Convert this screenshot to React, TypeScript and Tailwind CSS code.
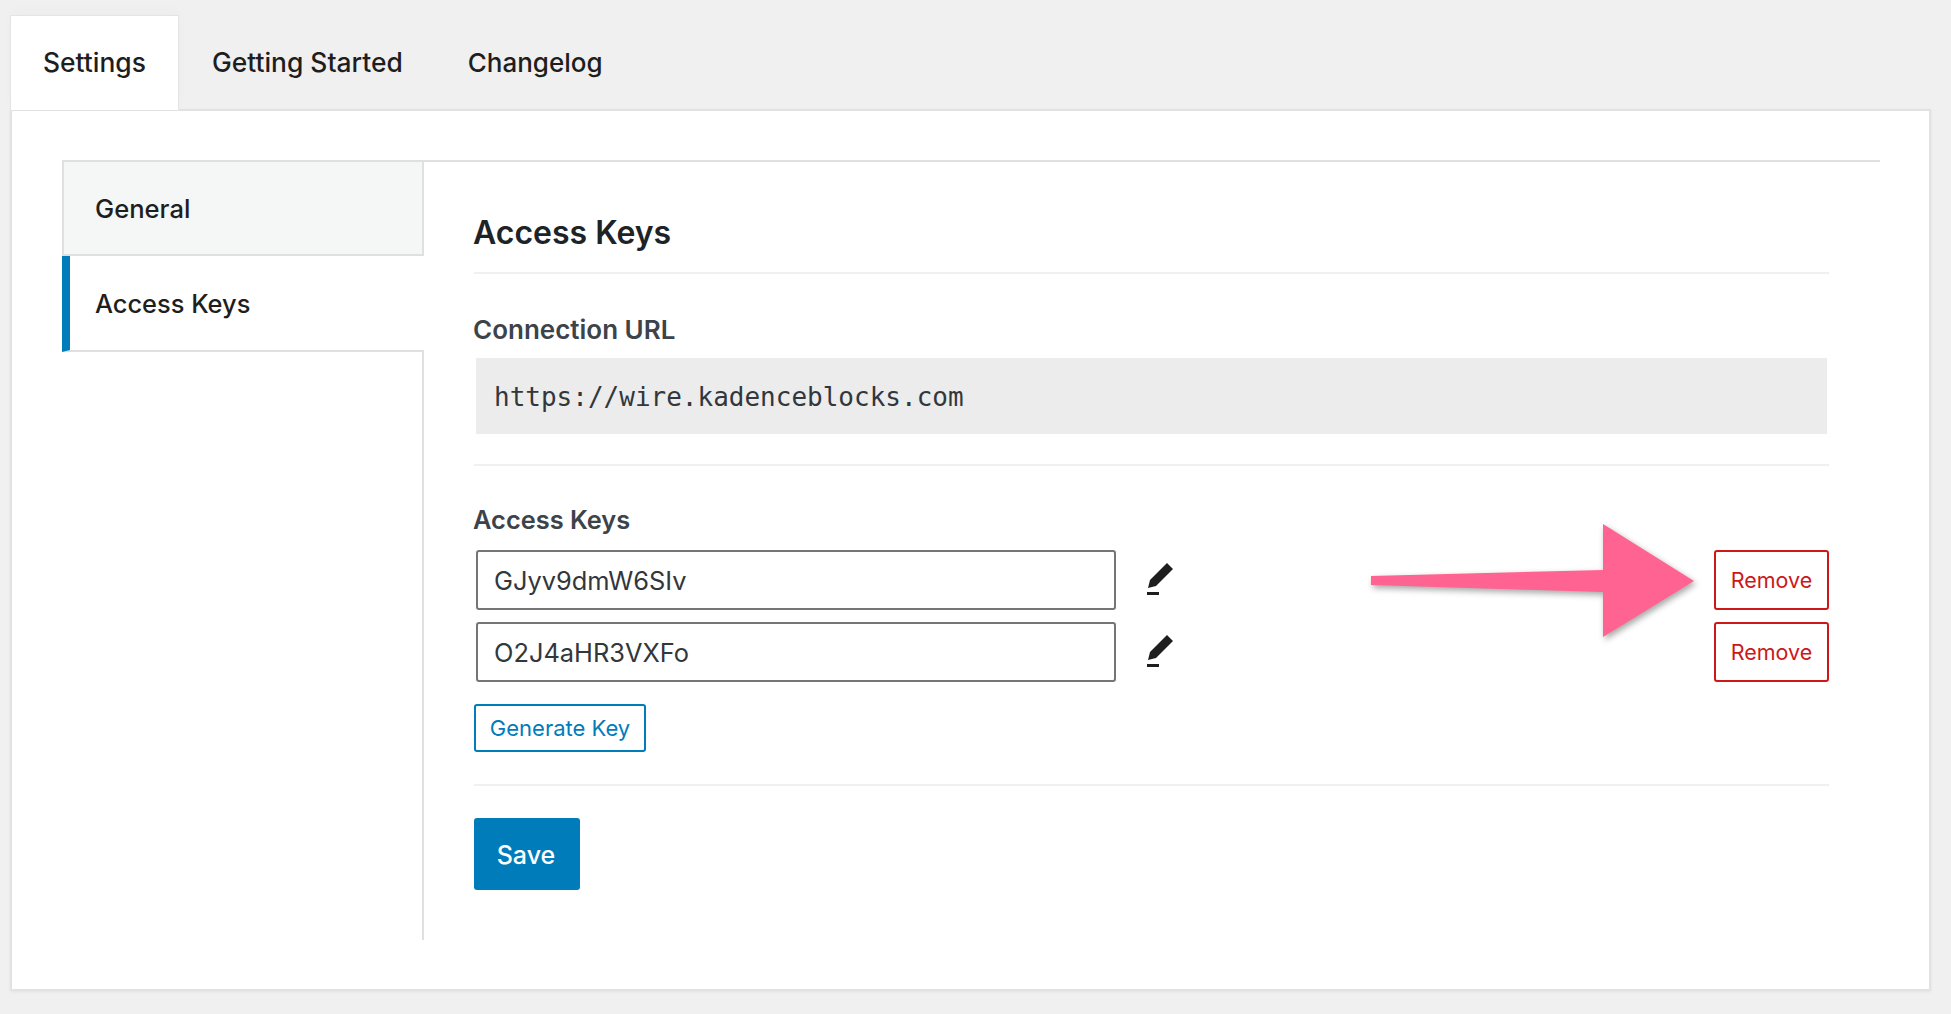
const keys = ["GJyv9dmW6SIv", "O2J4aHR3VXFo"];

function PencilIcon() {
  return (
    <svg viewBox="0 0 24 24" className="-mt-[2px] -ml-px size-[48px] fill-[#1e1e1e]">
      <path d="m19 7-3-3-8.5 8.5-1 4 4-1L19 7Zm-7 11.5H6V20h6v-1.5Z" />
    </svg>
  );
}

function KeyRow({ value, arrow }: { value: string; arrow?: boolean }) {
  return (
    <div className="relative flex h-[60px] items-center">
      <input
        readOnly
        value={value}
        className="ml-[2px] h-[60px] w-[640px] rounded-[3px] border-2 border-[#757575] bg-white px-[16px] pt-px text-[25.4px] text-[#32373c] outline-none"
      />
      <div className="ml-[20px]">
        <PencilIcon />
      </div>
      <button
        type="button"
        className="ml-auto h-[60px] w-[115px] rounded-[3px] border-2 border-[#cc1818] text-[21.5px] text-[#cc1818]"
      >
        Remove
      </button>
      {arrow && (
        <svg
          viewBox="0 0 340 125"
          className="absolute left-[891px] top-[-30px] h-[125px] w-[340px] fill-[#ff6391] drop-shadow-[2px_3px_3px_rgba(0,0,0,0.35)]"
        >
          <polygon points="6,56 238,50 238,4 329,61 238,117 238,72 6,65" />
        </svg>
      )}
    </div>
  );
}

export default function App() {
  return (
    <div className="h-[1014px] overflow-hidden bg-[#f0f0f1] pl-[10px] pr-[20px] pt-[15px] font-['Inter',sans-serif]">
      <div className="relative z-10 -mb-px flex h-[95px] items-center text-[26.4px] font-medium text-[#1e1e1e]">
        <div className="flex h-full w-[169px] items-center border-x border-t border-[#e4e4e4] bg-white pl-[32px] shadow-[0_-4px_12px_rgba(0,0,0,0.02)]">
          Settings
        </div>
        <div className="pl-[33px]">Getting Started</div>
        <div className="pl-[65px] text-[26px]">Changelog</div>
      </div>
      <div className="h-[882px] border-2 border-[#e2e2e2] bg-white pl-[50px] pr-[49px] pt-[49px] shadow-[0_1px_3px_rgba(0,0,0,0.06)]">
        <div className="flex h-[780px]">
          <div className="flex w-[362px] shrink-0 flex-col">
            <div className="flex h-[96px] items-center border-2 border-[#e0e0e0] bg-[#f5f6f6] pl-[31px] pt-[2px] text-[25.6px] font-medium text-[#1e1e1e]">
              General
            </div>
            <div className="flex h-[96px] items-center border-b-2 border-l-8 border-b-[#e0e0e0] border-l-[#007cba] pl-[25px] pt-[3px] text-[25.4px] font-medium text-[#1e1e1e]">
              Access Keys
            </div>
            <div className="flex-1 border-r-2 border-[#e0e0e0]" />
          </div>
          <div className="flex-1 border-t-2 border-[#e0e0e0] pl-[50px] pr-[51px]">
            <h1 className="flex h-[112px] items-end border-b-2 border-[#f0f0f1] pb-[16px] text-[32px] font-semibold leading-[46px] text-[#1d2327]">
              <span className="-ml-px">Access Keys</span>
            </h1>
            <div className="-ml-px mt-[38px] h-[36px] text-[26px] font-semibold leading-[36px] text-[#3c434a]">
              Connection URL
            </div>
            <div className="mx-[2px] mt-[10px] flex h-[76px] items-center bg-[#ececec] pl-[18px] pt-[2px] font-['DejaVu_Sans_Mono',monospace] text-[26px] text-[#32373c]">
              https://wire.kadenceblocks.com
            </div>
            <div className="mt-[30px] h-[2px] bg-[#f0f0f1]" />
            <div className="-ml-px mt-[36px] h-[36px] text-[25.4px] font-semibold leading-[36px] text-[#3c434a]">
              Access Keys
            </div>
            <div className="mt-[12px] flex flex-col gap-[12px]">
              {keys.map((key, i) => (
                <KeyRow key={key} value={key} arrow={i === 0} />
              ))}
            </div>
            <button
              type="button"
              className="mt-[22px] block h-[48px] w-[172px] rounded-[3px] border-2 border-[#007cba] text-[22px] text-[#007cba]"
            >
              Generate Key
            </button>
            <div className="mt-[32px] h-[2px] bg-[#f0f0f1]" />
            <button
              type="button"
              className="mt-[32px] block h-[72px] w-[106px] rounded-[3px] bg-[#007cba] pr-[2px] pt-[3px] text-[25px] font-medium text-white"
            >
              Save
            </button>
          </div>
        </div>
      </div>
    </div>
  );
}
